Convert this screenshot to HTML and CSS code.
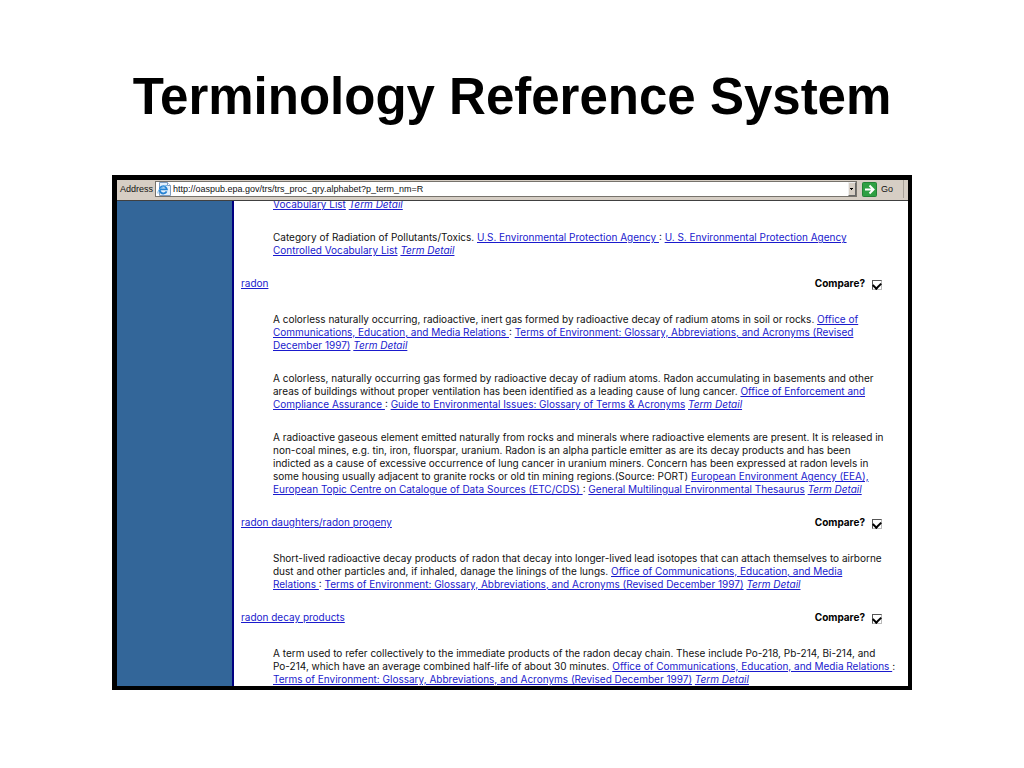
FILE: index.html
```html
<!DOCTYPE html>
<html lang="en">
<head>
<meta charset="utf-8">
<title>Terminology Reference System</title>
<link rel="stylesheet" href="styles.css">
</head>
<body>
<h1 class="title">Terminology Reference System</h1>
<main class="browser">
  <form class="toolbar">
    <label class="toolbar-label" for="address">Address</label>
    <div class="address-box">
      <svg class="page-icon" viewBox="0 0 14 14" aria-hidden="true">
        <path d="M2.500 .5h8l3 3v10h-11z" fill="#e3effa" stroke="#7d9cc0"/>
        <path d="M10.500 .5v3h3" fill="#fff" stroke="#7d9cc0"/>
        <path d="M9.600 9.400A3.600 3.600 0 1 1 9.900 7.400H3.200" fill="none" stroke="#2583d4" stroke-width="1.800"/>
        <path d="M1 11.500C0 9 5 3.500 10 3.500" fill="none" stroke="#62b1ea"/>
      </svg>
      <input class="address" id="address" type="text" value="http://oaspub.epa.gov/trs/trs_proc_qry.alphabet?p_term_nm=R">
      <button class="drop" type="button" aria-label="Show addresses"><svg viewBox="0 0 6 12" aria-hidden="true"><path d="M1 5h3v1H3v1H2V6H1z"/></svg></button>
    </div>
    <button class="go" type="button">
      <svg class="go-icon" viewBox="0 0 15 15" aria-hidden="true">
        <rect x=".5" y=".5" width="14" height="14" rx="1" fill="#2fa043" stroke="#238236"/>
        <path d="M3 7.500h8M7.500 3.500l4 4-4 4" fill="none" stroke="#fff" stroke-width="2"/>
      </svg>
      Go
    </button>
  </form>
  <div class="page">
    <aside class="side"></aside>
    <section class="content">
      <p class="def def-first"><a href="#">Vocabulary List</a> <a class="detail" href="#">Term Detail</a></p>
      <p class="def">Category of Radiation of Pollutants/Toxics. <a href="#">U.S. Environmental Protection Agency&nbsp;</a>: <a href="#">U. S. Environmental Protection Agency<br>Controlled Vocabulary List</a> <a class="detail" href="#">Term Detail</a></p>

      <div class="term"><a href="#">radon</a><label class="compare">Compare?<input class="check" type="checkbox" checked></label></div>
      <p class="def">A colorless naturally occurring, radioactive, inert gas formed by radioactive decay of radium atoms in soil or rocks. <a href="#">Office of<br>Communications, Education, and Media Relations&nbsp;</a>: <a href="#">Terms of Environment: Glossary, Abbreviations, and Acronyms (Revised<br>December 1997)</a> <a class="detail" href="#">Term Detail</a></p>
      <p class="def">A colorless, naturally occurring gas formed by radioactive decay of radium atoms. Radon accumulating in basements and other<br>areas of buildings without proper ventilation has been identified as a leading cause of lung cancer. <a href="#">Office of Enforcement and<br>Compliance Assurance&nbsp;</a>: <a href="#">Guide to Environmental Issues: Glossary of Terms &amp; Acronyms</a> <a class="detail" href="#">Term Detail</a></p>
      <p class="def">A radioactive gaseous element emitted naturally from rocks and minerals where radioactive elements are present. It is released in<br>non-coal mines, e.g. tin, iron, fluorspar, uranium. Radon is an alpha particle emitter as are its decay products and has been<br>indicted as a cause of excessive occurrence of lung cancer in uranium miners. Concern has been expressed at radon levels in<br>some housing usually adjacent to granite rocks or old tin mining regions.(Source: PORT) <a href="#">European Environment Agency (EEA),<br>European Topic Centre on Catalogue of Data Sources (ETC/CDS)&nbsp;</a>: <a href="#">General Multilingual Environmental Thesaurus</a> <a class="detail" href="#">Term Detail</a></p>

      <div class="term"><a href="#">radon daughters/radon progeny</a><label class="compare">Compare?<input class="check" type="checkbox" checked></label></div>
      <p class="def">Short-lived radioactive decay products of radon that decay into longer-lived lead isotopes that can attach themselves to airborne<br>dust and other particles and, if inhaled, danage the linings of the lungs. <a href="#">Office of Communications, Education, and Media<br>Relations&nbsp;</a>: <a href="#">Terms of Environment: Glossary, Abbreviations, and Acronyms (Revised December 1997)</a> <a class="detail" href="#">Term Detail</a></p>

      <div class="term"><a href="#">radon decay products</a><label class="compare">Compare?<input class="check" type="checkbox" checked></label></div>
      <p class="def">A term used to refer collectively to the immediate products of the radon decay chain. These include Po-218, Pb-214, Bi-214, and<br>Po-214, which have an average combined half-life of about 30 minutes. <a href="#">Office of Communications, Education, and Media Relations&nbsp;</a>:<br><a href="#">Terms of Environment: Glossary, Abbreviations, and Acronyms (Revised December 1997)</a> <a class="detail" href="#">Term Detail</a></p>
    </section>
  </div>
</main>
</body>
</html>
```
FILE: styles.css
```css
* {
  box-sizing: border-box;
}

body {
  margin: 0;
  padding: 67px 112px 78px;
  background: #fff;
  color: #111;
  font-family: "Liberation Sans", Arial, sans-serif;
  font-size: 10px;
  line-height: 13px;
}

.title {
  margin: 0 0 48px;
  color: #000;
  font-size: 51px;
  line-height: 60px;
  text-align: center;
  white-space: nowrap;
}

.browser {
  border: 4px solid #000;
  border-left-width: 5px;
  border-top-width: 5px;
}

.toolbar {
  display: flex;
  align-items: center;
  height: 21px;
  padding: 0 4px 2px 3px;
  border-bottom: 1px solid #404040;
  background: #d6cec4;
  font-size: 9px;
}

.toolbar-label {
  margin-right: 2px;
}

.address-box {
  display: flex;
  flex: 1;
  align-items: center;
  height: 16px;
  padding-left: 1px;
  border: 1px solid #77736c;
  background: #fff;
}

.page-icon {
  width: 14px;
  height: 14px;
}

.address {
  flex: 1;
  min-width: 0;
  height: 14px;
  margin: 0;
  padding: 0 2px;
  border: 0;
  outline: 0;
  background: transparent;
  color: #111;
  font: inherit;
}

.drop {
  width: 8px;
  height: 14px;
  padding: 0;
  border: 1px solid;
  border-color: #eee #666 #666 #eee;
  background: #d6cec4;
}

.drop svg {
  display: block;
  width: 6px;
  height: 12px;
}

.go {
  display: flex;
  align-items: center;
  gap: 4px;
  height: 18px;
  margin-left: 5px;
  padding: 0 10px 0 0;
  border: 0;
  border-right: 1px solid #a8a198;
  background: transparent;
  color: #111;
  font: inherit;
}

.go-icon {
  width: 15px;
  height: 15px;
}

.page {
  display: flex;
  overflow: hidden;
}

.side {
  flex: 0 0 117px;
  border-right: 2px solid #000080;
  background: #336699;
}

.content {
  flex: 1;
  min-width: 0;
  padding: 0 26px 0 7px;
  font-family: Inter, "Liberation Sans", sans-serif;
}

.def {
  margin: 0 0 20px 32px;
  white-space: nowrap;
}

.def-first {
  margin-top: -3px;
}

.def:last-child {
  margin-bottom: 0;
}

.term {
  display: flex;
  align-items: center;
  justify-content: space-between;
  height: 13px;
  margin-bottom: 23px;
}

a {
  color: #1a1acd;
  text-decoration: underline;
}

.detail {
  font-style: italic;
}

.compare {
  display: flex;
  align-items: center;
  gap: 7px;
  color: #000;
  font-weight: bold;
}

.check {
  display: grid;
  place-items: center;
  width: 10px;
  height: 10px;
  margin: 2px 0 0;
  border: 1px solid;
  border-color: #555 #bbb #bbb #555;
  appearance: none;
  background: #fff;
}

.check:checked::before {
  width: 4px;
  height: 6px;
  border: solid #000;
  border-width: 0 2px 2px 0;
  content: "";
  transform: rotate(45deg);
}
```
